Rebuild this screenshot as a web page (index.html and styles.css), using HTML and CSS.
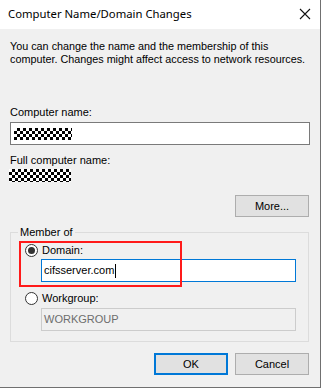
FILE: index.html
```html
<!DOCTYPE html>
<html lang="en">
<head>
  <meta charset="UTF-8" />
  <title>Computer Name/Domain Changes</title>
  <link rel="stylesheet" href="styles.css">
</head>
<body>
  <div class="window">
    <div class="titlebar">
      <span class="title">Computer Name/Domain Changes</span>
      <svg class="close" width="12" height="12" viewBox="0 0 12 12" aria-label="Close">
        <path d="M1 1 L11 11 M11 1 L1 11" stroke="#111" stroke-width="1.1" fill="none"/>
      </svg>
    </div>

    <div class="content">
      <p class="intro">You can change the name and the membership of this<br>computer. Changes might affect access to network resources.</p>

      <div class="field-label first">Computer name:</div>
      <div class="textbox"><span class="masked masked-input"></span></div>

      <div class="field-label">Full computer name:</div>
      <div class="masked masked-full"></div>

      <div class="more-row">
        <button class="btn">More...</button>
      </div>

      <fieldset class="member">
        <legend>Member of</legend>
        <div class="domain-group">
          <div class="option"><span class="radio checked"></span>Domain:</div>
          <div class="textbox inner active">cifsserver.com<span class="caret"></span></div>
          <div class="highlight"></div>
        </div>
        <div class="option"><span class="radio"></span>Workgroup:</div>
        <div class="textbox inner disabled">WORKGROUP</div>
      </fieldset>

      <div class="actions">
        <button class="btn btn-default">OK</button>
        <button class="btn">Cancel</button>
      </div>
    </div>
  </div>
</body>
</html>
```

FILE: styles.css
```css
* {
  margin: 0;
  padding: 0;
  box-sizing: border-box;
}
body {
  font-family: 'Liberation Sans', Arial, sans-serif;
  font-size: 11px;
  color: #000;
  background: #f0f0f0;
}

.window {
  width: 321px;
  height: 388px;
  background: #f0f0f0;
  border-right: 1px solid #707070;
  border-bottom: 1px solid #707070;
  display: flex;
  flex-direction: column;
}

.titlebar {
  height: 29px;
  background: #fff;
  display: flex;
  align-items: center;
  justify-content: space-between;
  padding: 0 9px 2px 8px;
}
.title {
  font-family: 'Noto Sans', sans-serif;
  font-size: 11.3px;
  color: #000;
}
.close {
  display: block;
}

.content {
  padding: 0 11px 0 10px;
}

.intro {
  margin-top: 11px;
  line-height: 13px;
  font-size: 10.8px;
  white-space: nowrap;
}

.field-label {
  line-height: 13px;
  margin-top: 9px;
}
.field-label.first {
  margin-top: 40px;
}

.textbox {
  height: 23px;
  width: 300px;
  margin-top: 3px;
  background: #fff;
  border: 1px solid #7a7a7a;
  padding: 0 2px;
  display: flex;
  align-items: center;
  line-height: 13px;
}

.masked {
  display: block;
  background: repeating-conic-gradient(#000 0 25%, #fff 0 50%) 0 0 / 6px 6px;
}
.masked-input {
  width: 58px;
  height: 12px;
  margin-left: 1px;
}
.masked-full {
  width: 62px;
  height: 13px;
  margin-top: 2px;
  margin-left: -1px;
}

.more-row {
  display: flex;
  justify-content: flex-end;
  margin-top: 13px;
}

.btn {
  width: 74px;
  height: 22px;
  background: #e1e1e1;
  border: 1px solid #adadad;
  font-family: inherit;
  font-size: inherit;
  color: #000;
}
.btn-default {
  border: 2px solid #0078d7;
}

.member {
  margin-top: 9px;
  width: 299px;
  border: 1px solid #dcdcdc;
  padding: 0 0 10px 0;
}
.member legend {
  margin-left: 7px;
  padding: 0 2px;
  line-height: 13px;
}

.domain-group {
  position: relative;
  margin-top: 5px;
}

.option {
  display: flex;
  align-items: center;
  gap: 4px;
  margin-left: 14px;
  height: 13px;
  line-height: 13px;
}

.radio {
  width: 13px;
  height: 13px;
  border-radius: 50%;
  border: 1px solid #333;
  background: #fff;
  display: flex;
  align-items: center;
  justify-content: center;
}
.radio.checked::after {
  content: '';
  width: 7px;
  height: 7px;
  border-radius: 50%;
  background: #333;
}

.textbox.inner {
  width: 255px;
  margin-left: 30px;
  margin-top: 2px;
}
.textbox.active {
  border-color: #0078d7;
}
.textbox.disabled {
  background: #f0f0f0;
  border-color: #cccccc;
  color: #6d6d6d;
  margin-top: 3px;
}
.member > .option {
  margin-top: 10px;
}

.caret {
  display: inline-block;
  width: 1px;
  height: 14px;
  background: #000;
  margin-left: 1px;
}

.highlight {
  position: absolute;
  left: 8px;
  top: -3px;
  width: 163px;
  height: 46px;
  border: 2px solid #ff1a1a;
}

.actions {
  display: flex;
  justify-content: flex-end;
  gap: 7px;
  margin-top: 11px;
}
```
